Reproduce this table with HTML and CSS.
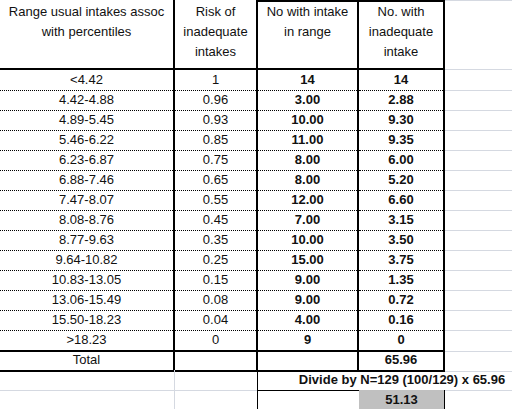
FILE: index.html
```html
<!DOCTYPE html>
<html>
<head>
<meta charset="utf-8">
<link rel="stylesheet" href="styles.css">
</head>
<body>
<div class="sheet">
  <div class="row head">
    <div>Range usual intakes assoc<br>with percentiles</div>
    <div>Risk of<br>inadequate<br>intakes</div>
    <div class="boxed">No with intake<br>in range</div>
    <div class="boxed">No. with<br>inadequate<br>intake</div>
    <div class="grid"></div>
  </div>
  <div class="row d"><div>&lt;4.42</div><div>1</div><div class="b">14</div><div class="b">14</div><div></div></div>
  <div class="row d"><div>4.42-4.88</div><div>0.96</div><div class="b">3.00</div><div class="b">2.88</div><div></div></div>
  <div class="row d"><div>4.89-5.45</div><div>0.93</div><div class="b">10.00</div><div class="b">9.30</div><div></div></div>
  <div class="row d"><div>5.46-6.22</div><div>0.85</div><div class="b">11.00</div><div class="b">9.35</div><div></div></div>
  <div class="row d"><div>6.23-6.87</div><div>0.75</div><div class="b">8.00</div><div class="b">6.00</div><div></div></div>
  <div class="row d"><div>6.88-7.46</div><div>0.65</div><div class="b">8.00</div><div class="b">5.20</div><div></div></div>
  <div class="row d"><div>7.47-8.07</div><div>0.55</div><div class="b">12.00</div><div class="b">6.60</div><div></div></div>
  <div class="row d"><div>8.08-8.76</div><div>0.45</div><div class="b">7.00</div><div class="b">3.15</div><div></div></div>
  <div class="row d"><div>8.77-9.63</div><div>0.35</div><div class="b">10.00</div><div class="b">3.50</div><div></div></div>
  <div class="row d"><div>9.64-10.82</div><div>0.25</div><div class="b">15.00</div><div class="b">3.75</div><div></div></div>
  <div class="row d"><div>10.83-13.05</div><div>0.15</div><div class="b">9.00</div><div class="b">1.35</div><div></div></div>
  <div class="row d"><div>13.06-15.49</div><div>0.08</div><div class="b">9.00</div><div class="b">0.72</div><div></div></div>
  <div class="row d"><div>15.50-18.23</div><div>0.04</div><div class="b">4.00</div><div class="b">0.16</div><div></div></div>
  <div class="row d thick"><div>&gt;18.23</div><div>0</div><div class="b">9</div><div class="b">0</div><div></div></div>
  <div class="row d thick"><div>Total</div><div></div><div></div><div class="b">65.96</div><div></div></div>
  <div class="row f1"><div></div><div></div><div></div><div class="b over"><span>Divide by N=129 (100/129) x 65.96</span></div><div></div></div>
  <div class="row f2"><div></div><div></div><div></div><div class="b shade">51.13</div><div></div></div>
</div>
</body>
</html>
```

FILE: styles.css
```css
* {
  box-sizing: border-box;
  margin: 0;
  padding: 0;
}

html, body {
  background: #fff;
}

body {
  font-family: "Liberation Sans", Arial, sans-serif;
  font-size: 13px;
  color: #111;
  width: 512px;
  height: 409px;
  overflow: hidden;
}

.row {
  display: grid;
  grid-template-columns: 175px 83px 101px 86px 67px;
  height: 20px;
}

.row > div {
  display: flex;
  align-items: center;
  justify-content: center;
  white-space: nowrap;
  line-height: 20px;
}

.b {
  font-weight: bold;
}

/* header */
.head {
  height: 70px;
}

.head > div {
  flex-direction: column;
  justify-content: flex-start;
  align-items: center;
  text-align: center;
  padding-top: 2px;
  border-bottom: 2px solid #000;
  border-right: 2px solid #000;
}

.head > .boxed {
  border-top: 2px solid #000;
  padding-top: 0;
}

.head > .grid {
  border: none;
  border-top: 1px solid #d5d9e1;
  border-bottom: 1px solid #d5d9e1;
}

/* data rows */
.d > div:nth-child(-n+4) {
  border-right: 2px solid #000;
  border-bottom: 1px dotted #000;
}

.d > div:nth-child(5) {
  border-bottom: 1px solid #d5d9e1;
}

.d.thick > div:nth-child(-n+4) {
  border-bottom: 2px solid #000;
}

/* footer rows */
.f1 > div:nth-child(1),
.f2 > div:nth-child(1) {
  border-right: 1px solid #d5d9e1;
}

.f1 > div:nth-child(2),
.f2 > div:nth-child(2) {
  border-right: 1px solid #000;
}

.f1 > div:nth-child(1),
.f1 > div:nth-child(2),
.f1 > div:nth-child(5) {
  border-bottom: 1px solid #d5d9e1;
}

.f1 > div:nth-child(3),
.f1 > div:nth-child(4) {
  border-bottom: 1px solid #000;
}

.over {
  overflow: visible;
}

.over span {
  position: relative;
  z-index: 1;
}

.shade {
  background: #c0c0c0;
  border-right: 1px solid #000;
}
```
